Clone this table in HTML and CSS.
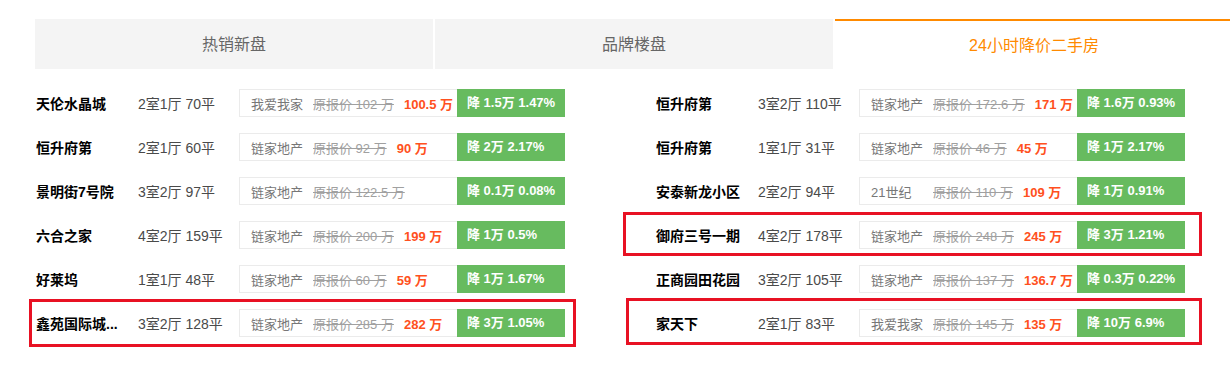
FILE: index.html
```html
<!DOCTYPE html>
<html lang="zh-CN">
<head>
<meta charset="utf-8">
<title>24小时降价二手房</title>
<link rel="stylesheet" href="styles.css">
</head>
<body>
<div class="wrap">
  <div class="tabs">
    <div class="tab">热销新盘</div>
    <div class="tab">品牌楼盘</div>
    <div class="tab active">24小时降价二手房</div>
  </div>
  <div class="lists">
    <div class="col">
      <div class="row"><span class="name">天伦水晶城</span><span class="layout">2室1厅 70平</span><div class="info"><span class="src">我爱我家</span><del class="old">原报价 102 万</del><span class="price">100.5 万</span></div><div class="drop">降 1.5万 1.47%</div></div>
      <div class="row"><span class="name">恒升府第</span><span class="layout">2室1厅 60平</span><div class="info"><span class="src">链家地产</span><del class="old">原报价 92 万</del><span class="price">90 万</span></div><div class="drop">降 2万 2.17%</div></div>
      <div class="row"><span class="name">景明街7号院</span><span class="layout">3室2厅 97平</span><div class="info"><span class="src">链家地产</span><del class="old">原报价 122.5 万</del></div><div class="drop">降 0.1万 0.08%</div></div>
      <div class="row"><span class="name">六合之家</span><span class="layout">4室2厅 159平</span><div class="info"><span class="src">链家地产</span><del class="old">原报价 200 万</del><span class="price">199 万</span></div><div class="drop">降 1万 0.5%</div></div>
      <div class="row"><span class="name">好莱坞</span><span class="layout">1室1厅 48平</span><div class="info"><span class="src">链家地产</span><del class="old">原报价 60 万</del><span class="price">59 万</span></div><div class="drop">降 1万 1.67%</div></div>
      <div class="row"><span class="name">鑫苑国际城...</span><span class="layout">3室2厅 128平</span><div class="info"><span class="src">链家地产</span><del class="old">原报价 285 万</del><span class="price">282 万</span></div><div class="drop">降 3万 1.05%</div></div>
    </div>
    <div class="col">
      <div class="row"><span class="name">恒升府第</span><span class="layout">3室2厅 110平</span><div class="info"><span class="src">链家地产</span><del class="old">原报价 172.6 万</del><span class="price">171 万</span></div><div class="drop">降 1.6万 0.93%</div></div>
      <div class="row"><span class="name">恒升府第</span><span class="layout">1室1厅 31平</span><div class="info"><span class="src">链家地产</span><del class="old">原报价 46 万</del><span class="price">45 万</span></div><div class="drop">降 1万 2.17%</div></div>
      <div class="row"><span class="name">安泰新龙小区</span><span class="layout">2室2厅 94平</span><div class="info"><span class="src">21世纪</span><del class="old">原报价 110 万</del><span class="price">109 万</span></div><div class="drop">降 1万 0.91%</div></div>
      <div class="row"><span class="name">御府三号一期</span><span class="layout">4室2厅 178平</span><div class="info"><span class="src">链家地产</span><del class="old">原报价 248 万</del><span class="price">245 万</span></div><div class="drop">降 3万 1.21%</div></div>
      <div class="row"><span class="name">正商园田花园</span><span class="layout">3室2厅 105平</span><div class="info"><span class="src">链家地产</span><del class="old">原报价 137 万</del><span class="price">136.7 万</span></div><div class="drop">降 0.3万 0.22%</div></div>
      <div class="row"><span class="name">家天下</span><span class="layout">2室1厅 83平</span><div class="info"><span class="src">我爱我家</span><del class="old">原报价 145 万</del><span class="price">135 万</span></div><div class="drop">降 10万 6.9%</div></div>
    </div>
  </div>
</div>
<div class="mark mark-a"></div>
<div class="mark mark-b"></div>
<div class="mark mark-c"></div>
</body>
</html>
```
FILE: styles.css
```css
html, body {
  margin: 0;
  padding: 0;
  overflow: hidden;
  background: #fff;
}
body {
  position: relative;
  width: 1230px;
  height: 367px;
  font-family: "Liberation Sans", "Noto Sans CJK SC", sans-serif;
  color: #333;
}
.wrap {
  width: 1200px;
  margin-left: 35px;
  padding-top: 19px;
}
.tabs {
  display: flex;
  gap: 2px;
}
.tab {
  flex: 0 0 398px;
  height: 50px;
  box-sizing: border-box;
  background: #f4f4f4;
  color: #666;
  font-size: 16px;
  line-height: 52px;
  text-align: center;
}
.tab.active {
  background: #fff;
  border-top: 2px solid #ff8a00;
  line-height: 50px;
  color: #ff8a00;
}
.lists {
  display: flex;
  margin-top: 20px;
}
.col {
  flex: 0 0 620px;
  display: flex;
  flex-direction: column;
  gap: 16px;
}
.row {
  display: flex;
  align-items: center;
  height: 28px;
}
.name {
  width: 90px;
  margin-left: 1px;
  margin-right: 12px;
  font-size: 14px;
  font-weight: bold;
  color: #000;
  white-space: nowrap;
}
.layout {
  width: 101px;
  font-size: 14px;
  color: #4a4a4a;
  white-space: nowrap;
}
.info {
  width: 218px;
  height: 28px;
  box-sizing: border-box;
  border: 1px solid #ebebeb;
  border-right: none;
  display: flex;
  align-items: center;
  padding-left: 11px;
  font-size: 13px;
  white-space: nowrap;
}
.src {
  width: 52px;
  flex-shrink: 0;
  color: #777;
  margin-right: 10px;
}
.old {
  color: #a0a0a0;
  margin-right: 10px;
}
.price {
  color: #ff5020;
  font-weight: bold;
}
.drop {
  width: 108px;
  height: 28px;
  box-sizing: border-box;
  padding-left: 10px;
  background: #67bb5f;
  color: #fff;
  font-size: 13px;
  font-weight: bold;
  line-height: 28px;
  white-space: nowrap;
}
.mark {
  position: absolute;
  border: 3px solid #e81123;
  box-sizing: border-box;
}
.mark-a {
  left: 29px;
  top: 299px;
  width: 547px;
  height: 48px;
}
.mark-b {
  left: 623px;
  top: 212px;
  width: 579px;
  height: 44px;
}
.mark-c {
  left: 626px;
  top: 298px;
  width: 576px;
  height: 47px;
}
```
